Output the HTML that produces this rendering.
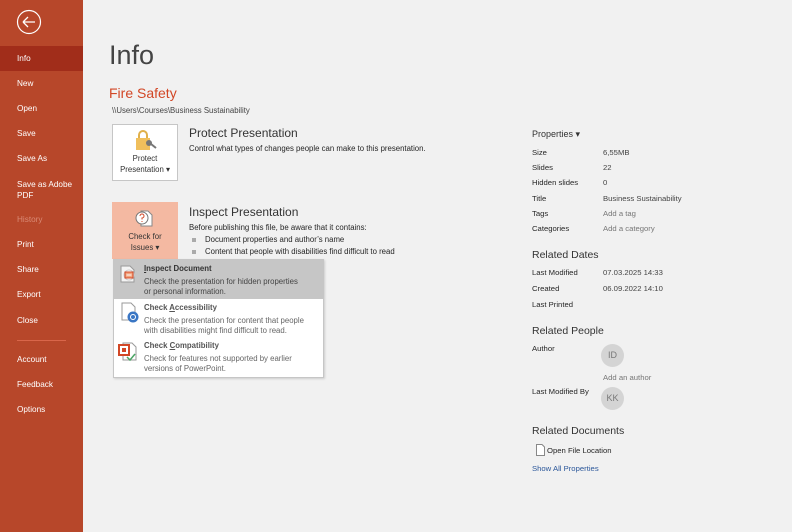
<!DOCTYPE html>
<html><head><meta charset="utf-8"><style>
*{margin:0;padding:0;box-sizing:border-box}
body{width:792px;height:532px;overflow:hidden;background:#f1f1f1;font-family:"Liberation Sans",sans-serif;position:relative;color:#262626}
#sb{position:absolute;left:0;top:0;width:83px;height:532px;background:#b7472a}
.mi{position:absolute;left:17px;font-size:8.2px;color:#fff}
.a{position:absolute}
.s{font-size:7.8px}
.lbl{position:absolute;left:532px;font-size:7.7px;color:#262626}
.val{position:absolute;left:603px;font-size:7.7px;color:#444}
.lnk{color:#2b579a}
.h{position:absolute;left:532px;font-size:11px;color:#333}
.circ{position:absolute;left:601px;width:23px;height:23px;border-radius:50%;background:#d4d4d4;color:#777;font-size:9px;text-align:center;line-height:23px}
</style></head><body>
<div id="sb">
<svg class="a" style="left:16px;top:9px" width="26" height="26" viewBox="0 0 26 26"><circle cx="13" cy="13" r="11.5" fill="none" stroke="#fff" stroke-width="1.2"/><path d="M7 13h12M7 13l5-5M7 13l5 5" stroke="#fff" stroke-width="1.3" fill="none"/></svg>
<div class="a" style="left:0;top:46px;width:83px;height:25px;background:#a12d1a"></div>
<div class="mi" style="top:54px">Info</div>
<div class="mi" style="top:79px">New</div>
<div class="mi" style="top:104px">Open</div>
<div class="mi" style="top:129px">Save</div>
<div class="mi" style="top:154px">Save As</div>
<div class="mi" style="top:179px;line-height:11px">Save as Adobe<br>PDF</div>
<div class="mi" style="top:215px;color:#d98a75">History</div>
<div class="mi" style="top:240px">Print</div>
<div class="mi" style="top:265px">Share</div>
<div class="mi" style="top:290px">Export</div>
<div class="mi" style="top:316px">Close</div>
<div class="a" style="left:17px;top:340px;width:49px;height:1px;background:#d9664a"></div>
<div class="mi" style="top:355px">Account</div>
<div class="mi" style="top:380px">Feedback</div>
<div class="mi" style="top:405px">Options</div>
</div>

<div class="a" style="left:109px;top:40px;font-size:27px;color:#444">Info</div>
<div class="a" style="left:109px;top:85px;font-size:14px;color:#d24726">Fire Safety</div>
<div class="a s" style="left:112px;top:106px;color:#444">\\Users\Courses\Business Sustainability</div>

<div class="a" style="left:112px;top:124px;width:66px;height:57px;background:#fff;border:1px solid #c6c6c6"></div>
<svg class="a" style="left:134px;top:130px" width="24" height="22" viewBox="0 0 24 22"><path d="M5 8V5a4 4 0 0 1 8 0v3" fill="none" stroke="#e0b04a" stroke-width="2"/><rect x="2" y="8" width="14" height="12" fill="#f0bf5c"/><circle cx="15" cy="13" r="3" fill="#777"/><path d="M17 14l5 4" stroke="#777" stroke-width="2"/></svg>
<div class="a s" style="left:113px;top:154px;width:64px;text-align:center;line-height:10.5px;color:#333">Protect<br>Presentation ▾</div>
<div class="a" style="left:189px;top:126px;font-size:12px;color:#333">Protect Presentation</div>
<div class="a s" style="left:189px;top:144px">Control what types of changes people can make to this presentation.</div>

<div class="a" style="left:112px;top:202px;width:66px;height:57px;background:#f4b9a2"></div>
<svg class="a" style="left:134px;top:208px" width="20" height="20" viewBox="0 0 20 20"><path d="M7 3h7l4 4v11H7z" fill="#fff" stroke="#888"/><circle cx="8" cy="10" r="6" fill="#fff" stroke="#777"/><path d="M6 8a2 2 0 1 1 2 2v1.5M8 13v1" stroke="#d24726" fill="none"/></svg>
<div class="a s" style="left:113px;top:232px;width:64px;text-align:center;line-height:10.5px;color:#333">Check for<br>Issues ▾</div>
<div class="a" style="left:189px;top:205px;font-size:12px;color:#333">Inspect Presentation</div>
<div class="a s" style="left:189px;top:223px">Before publishing this file, be aware that it contains:</div>
<div class="a" style="left:192px;top:238px;width:4px;height:4px;background:#aaa"></div>
<div class="a s" style="left:205px;top:235px">Document properties and author’s name</div>
<div class="a" style="left:192px;top:250px;width:4px;height:4px;background:#aaa"></div>
<div class="a s" style="left:205px;top:247px">Content that people with disabilities find difficult to read</div>

<div class="a" style="left:113px;top:259px;width:211px;height:119px;background:#fff;border:1px solid #c6c6c6;box-shadow:1px 1px 2px rgba(0,0,0,.15)"></div>
<div class="a" style="left:114px;top:260px;width:209px;height:39px;background:#c6c6c6"></div>
<svg class="a" style="left:119px;top:264px" width="18" height="20" viewBox="0 0 18 20"><path d="M2 2h9l4 4v12H2z" fill="#f4f4f4" stroke="#999"/><circle cx="10" cy="11" r="5" fill="#fff" stroke="#ccc"/><rect x="6" y="8" width="8" height="6" fill="#f2a47f" stroke="#d24726"/><path d="M7.5 11h5" stroke="#fff"/></svg>
<div class="a s" style="left:144px;top:264px;font-weight:bold;color:#333"><u>I</u>nspect Document</div>
<div class="a s" style="left:144px;top:277px;line-height:10px;color:#444">Check the presentation for hidden properties<br>or personal information.</div>
<svg class="a" style="left:119px;top:302px" width="22" height="22" viewBox="0 0 22 22"><path d="M3 1h9l4 4v13H3z" fill="#fff" stroke="#999"/><circle cx="14" cy="15" r="5.5" fill="#3a76c4"/><circle cx="14" cy="15" r="2.5" fill="none" stroke="#fff"/></svg>
<div class="a s" style="left:144px;top:303px;font-weight:bold;color:#555">Check <u>A</u>ccessibility</div>
<div class="a s" style="left:144px;top:316px;line-height:10px;color:#666">Check the presentation for content that people<br>with disabilities might find difficult to read.</div>
<svg class="a" style="left:117px;top:341px" width="22" height="22" viewBox="0 0 22 22"><path d="M6 2h9l4 4v13H6z" fill="#fff" stroke="#999"/><rect x="2" y="4" width="10" height="10" fill="#fff" stroke="#d24726" stroke-width="2"/><rect x="5" y="7" width="4" height="4" fill="#d24726"/><path d="M10 16l3 3 5-6" stroke="#4aa564" stroke-width="1.5" fill="none"/></svg>
<div class="a s" style="left:144px;top:341px;font-weight:bold;color:#555">Check <u>C</u>ompatibility</div>
<div class="a s" style="left:144px;top:354px;line-height:10px;color:#666">Check for features not supported by earlier<br>versions of PowerPoint.</div>

<div class="h" style="top:129px;font-size:9px">Properties ▾</div>
<div class="lbl" style="top:148px">Size</div><div class="val" style="top:148px">6,55MB</div>
<div class="lbl" style="top:163px">Slides</div><div class="val" style="top:163px">22</div>
<div class="lbl" style="top:178px">Hidden slides</div><div class="val" style="top:178px">0</div>
<div class="lbl" style="top:194px">Title</div><div class="val" style="top:194px">Business Sustainability</div>
<div class="lbl" style="top:209px">Tags</div><div class="val" style="top:209px;color:#777">Add a tag</div>
<div class="lbl" style="top:224px">Categories</div><div class="val" style="top:224px;color:#777">Add a category</div>
<div class="h" style="top:249px;font-size:10.5px">Related Dates</div>
<div class="lbl" style="top:268px">Last Modified</div><div class="val" style="top:268px">07.03.2025 14:33</div>
<div class="lbl" style="top:284px">Created</div><div class="val" style="top:284px">06.09.2022 14:10</div>
<div class="lbl" style="top:300px">Last Printed</div>
<div class="h" style="top:325px;font-size:10.5px">Related People</div>
<div class="lbl" style="top:344px">Author</div>
<div class="circ" style="top:344px">ID</div>
<div class="val" style="top:373px;color:#777">Add an author</div>
<div class="lbl" style="top:387px">Last Modified By</div>
<div class="circ" style="top:387px">KK</div>
<div class="h" style="top:425px;font-size:10.5px">Related Documents</div>
<svg class="a" style="left:536px;top:444px" width="9" height="12" viewBox="0 0 9 12"><path d="M.5.5h5.5l2.5 2.5v8.5H.5z" fill="#fff" stroke="#888"/></svg>
<div class="lbl" style="left:547px;top:446px">Open File Location</div>
<div class="lbl lnk" style="top:464px">Show All Properties</div>
</body></html>
